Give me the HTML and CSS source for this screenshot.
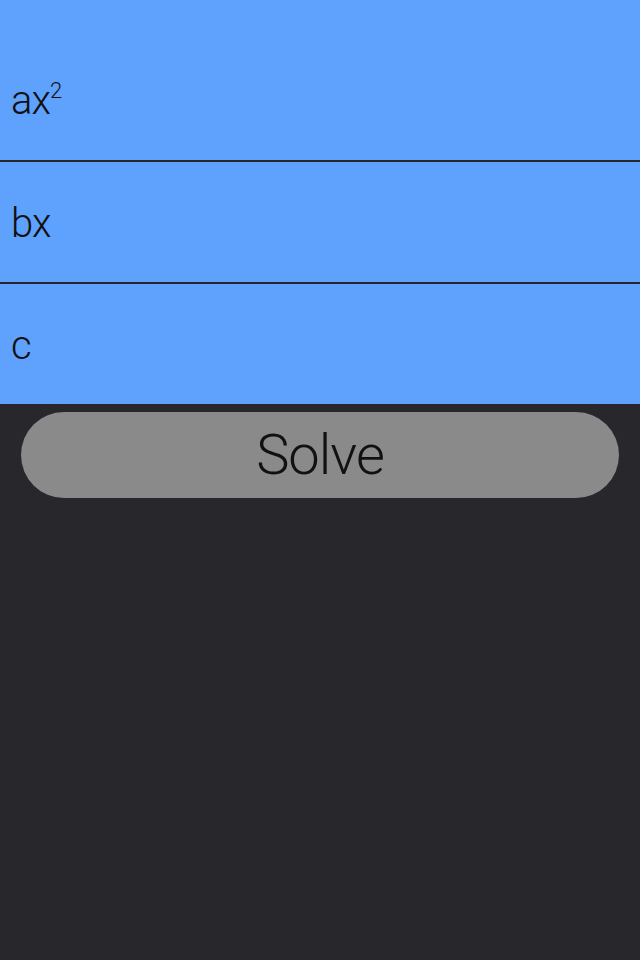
FILE: index.html
```html
<!DOCTYPE html>
<html lang="en">
<head>
  <meta charset="UTF-8" />
  <meta name="viewport" content="width=device-width, initial-scale=1.0" />
  <title>Quadratic Solver</title>
  <link rel="stylesheet" href="styles.css">
</head>
<body>
  <div class="inputs">
    <label class="field field-first"><span class="label">ax<sup>2</sup></span></label>
    <label class="field"><span class="label">bx</span></label>
    <label class="field"><span class="label">c</span></label>
  </div>
  <div class="actions">
    <button class="solve-btn">Solve</button>
  </div>
</body>
</html>
```
FILE: styles.css
```css
body {
  margin: 0;
  background-color: #28272c;
  font-family: Roboto, "Liberation Sans", sans-serif;
  font-weight: 300;
}

.inputs {
  display: flex;
  flex-direction: column;
  gap: 2px;
}

.field {
  height: 120px;
  background-color: #5fa2fe;
  display: flex;
  align-items: center;
  padding: 2px 11px 0;
  box-sizing: border-box;
}

.field-first {
  height: 160px;
  padding-top: 40px;
}

.label {
  font-size: 40px;
  color: #111;
  letter-spacing: -1px;
}

.label sup {
  font-size: 22px;
  vertical-align: 16px;
  line-height: 0;
  margin-left: 0;
}

.actions {
  padding: 8px 21px;
}

.solve-btn {
  display: block;
  width: 100%;
  height: 86px;
  border: none;
  border-radius: 43px;
  background-color: #8a8a8a;
  color: #111;
  font-family: inherit;
  font-weight: 300;
  font-size: 56px;
  letter-spacing: -1px;
  cursor: pointer;
}
```
